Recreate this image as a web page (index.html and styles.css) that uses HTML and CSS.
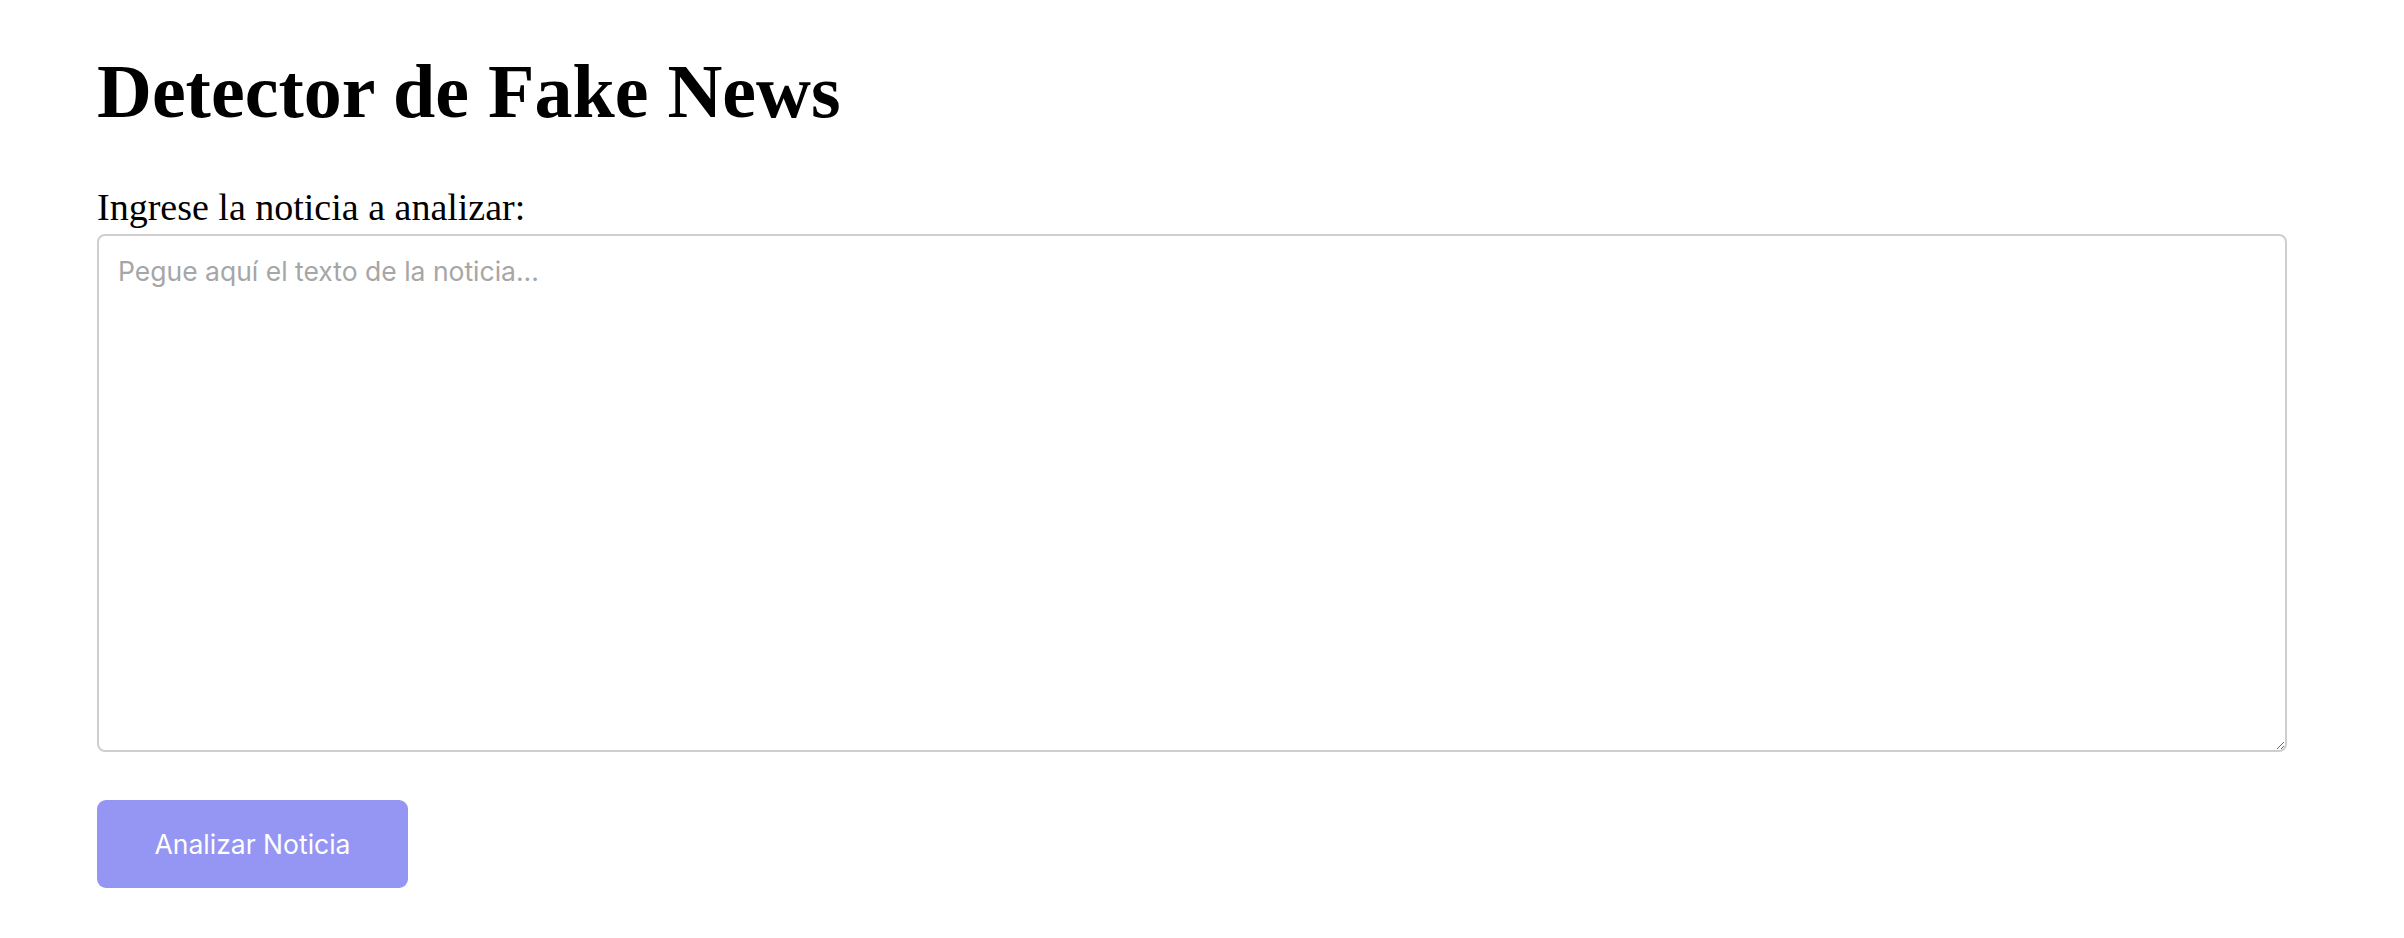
FILE: index.html
```html
<!DOCTYPE html>
<html lang="es">
<head>
<meta charset="utf-8">
<title>Detector de Fake News</title>
<link rel="stylesheet" href="styles.css">
</head>
<body>
<main class="page">
  <h1 class="title">Detector de Fake News</h1>
  <label class="field-label" for="news">Ingrese la noticia a analizar:</label>
  <textarea id="news" class="news-input" placeholder="Pegue aquí el texto de la noticia..."></textarea>
  <button class="analyze-btn" type="button">Analizar Noticia</button>
</main>
</body>
</html>
```

FILE: styles.css
```css
html, body {
  margin: 0;
  padding: 0;
  background: #ffffff;
}

.page {
  display: flex;
  flex-direction: column;
  align-items: flex-start;
  padding: 49px 0 0 97px;
  font-family: "Liberation Serif", "Times New Roman", serif;
  color: #000;
}

.title {
  margin: 0;
  font-size: 76px;
  font-weight: bold;
  line-height: 84px;
}

.field-label {
  display: block;
  margin-top: 53px;
  margin-bottom: 6px;
  font-size: 38px;
  line-height: 42px;
}

.news-input {
  box-sizing: border-box;
  width: 2190px;
  height: 518px;
  margin: 0;
  padding: 19px 19px;
  border: 2px solid #cfcfcf;
  border-radius: 8px;
  font-family: Inter, "Helvetica Neue", Arial, sans-serif;
  font-size: 26.5px;
  line-height: 32px;
  color: #000;
  resize: both;
  outline: none;
}

.news-input::placeholder {
  color: #a6a6a6;
}

.analyze-btn {
  margin-top: 48px;
  width: 311px;
  height: 88px;
  border: none;
  border-radius: 9px;
  background: #9595f3;
  color: #ffffff;
  font-family: Inter, "Helvetica Neue", Arial, sans-serif;
  font-size: 26.5px;
  cursor: pointer;
}
```
